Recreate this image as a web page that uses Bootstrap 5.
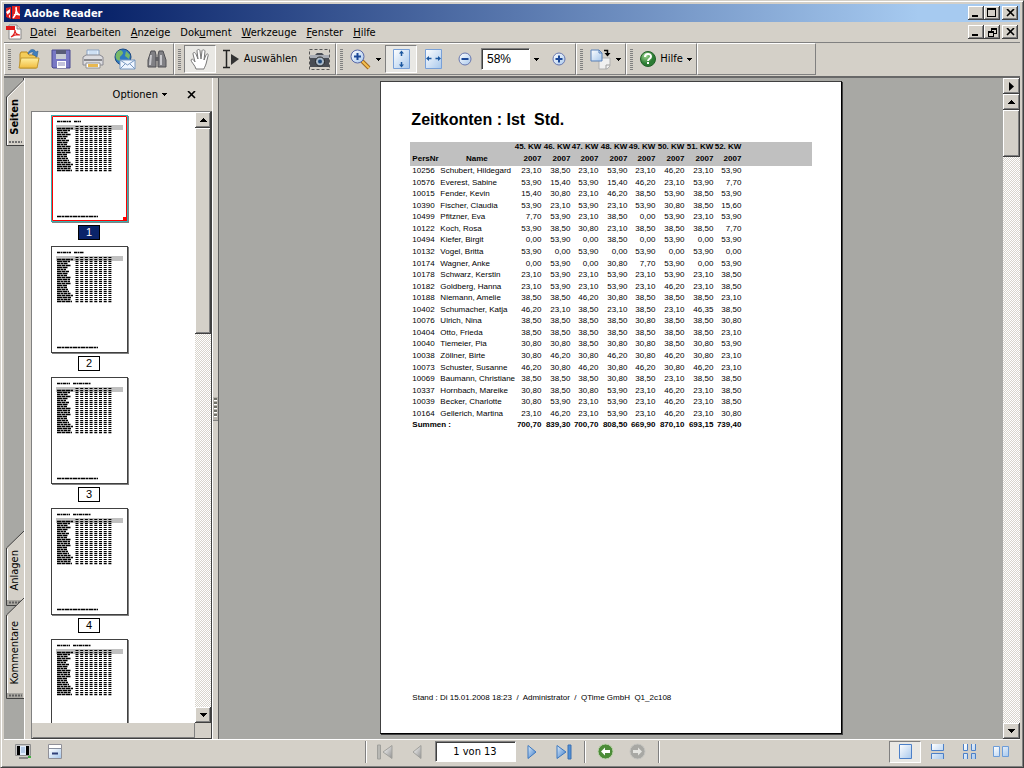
<!DOCTYPE html>
<html lang="de">
<head>
<meta charset="utf-8">
<meta name="viewport" content="width=device-width, initial-scale=1">
<title>Adobe Reader</title>
<link href="https://cdn.jsdelivr.net/npm/bootstrap@5.3.0/dist/css/bootstrap.min.css" rel="stylesheet">
<style>
:root{--face:#d4d0c8;--shade:#808080;--dark:#404040;--desk:#a8a8a4}
body{background:var(--face);color:#000;font:11px/14px "DejaVu Sans Condensed","Liberation Sans",sans-serif}
button{font:inherit;color:inherit;padding:0;border:0;background:none}
svg{display:block;flex:none}
.win{border:1px solid;border-color:#d4d0c8 #404040 #404040 #d4d0c8;box-shadow:inset 1px 1px #fff,inset -1px -1px #808080;padding:3px 3px 2px}
.titlebar{height:18px;background:linear-gradient(90deg,#0a246a 10%,#a6caf0 90%);color:#fff;font-weight:bold;padding:0 2px}
.raised{background:var(--face);box-shadow:inset -1px -1px #404040,inset 1px 1px #fff,inset -2px -2px #808080;display:flex;align-items:center;justify-content:center}
.cap{width:16px;height:14px}
.ttl,.menubar a{padding-top:2px}
.menubar{height:20px;padding:0 2px;border-bottom:1px solid var(--shade);box-sizing:content-box}
.menubar a{color:#000;text-decoration:none;margin-left:10px}
.menubar a:first-of-type{margin-left:7px}
.tools{height:33px}
.tgroup{border:1px solid;border-color:#fff #808080 #808080 #fff;height:32px}
.grip{width:3px;height:21px;margin:0 3px;background:repeating-linear-gradient(#808080 0 1px,transparent 1px 2px)}
.tgroup:first-child .grip{margin-right:2px}
.tb{width:32px;height:28px;display:flex;align-items:center;justify-content:center}
.pressed{background:#e9e8e4;border:1px solid;border-color:#808080 #fff #fff #808080}
.sel{width:87px;gap:4px}.wide{width:39px;gap:5px}.help{width:60px;gap:4px}.slim{width:13px}
.sunk{border:1px solid;border-color:#808080 #fff #fff #808080;box-shadow:inset 1px 1px #404040;background:#fff;font:inherit;color:#000;padding:0 5px;border-radius:0;height:22px}
.zoomval{width:49px;font-family:"Liberation Sans",sans-serif;font-size:12px}
.main{border-top:2px solid #686868;min-height:0}
.tabs{width:20px;background:var(--desk);padding-bottom:40px}
.sidetab{width:18px;margin-left:2px;position:relative;display:flex;align-items:center;justify-content:center}
.sidetab svg{position:absolute;inset:0}
.sidetab span{writing-mode:vertical-rl;transform:rotate(180deg);position:relative;white-space:nowrap}
.t1{height:68px;font-weight:bold;padding-top:10px}.t2{height:75px;padding-top:3px}.t3{height:101px;margin-top:-8px}
.panel{width:188px;border-left:1px solid #fff}
.panelhead{height:33px;padding:0 16px 0 0;gap:20px}
.list{margin-left:6px;border:1px solid;border-color:#808080 #404040 #404040 #808080;min-height:0}
.thumbs{background:#fff;overflow:hidden;padding:3px 0 0 19px}
.thumb{width:77px;height:107px;border:1px solid #404040;background:#fff;box-shadow:1px 1px #808080}
.thumb.on{border-color:#38b0b0}
.num{width:22px;height:15px;border:1px solid #000;margin:3px 0 6px 27px;text-align:center;line-height:13px;font-family:"Liberation Sans",sans-serif;background:#fff}
.num.on{background:#0a246a;color:#fff}
.hbar{height:15px;border-right:1px solid #808080;border-bottom:1px solid #808080;margin-left:1px}
.sbar{width:16px;background:repeating-conic-gradient(#fff 0 25%,#d8d4cc 0 50%) 0 0/2px 2px}
.sbar .raised{width:100%;height:16px}
.split{width:7px;border-left:1px solid #fff;border-right:1px solid #606060}
.knob{width:5px;height:24px;border-bottom:1px solid #808080;background:repeating-linear-gradient(#707068 0 2px,#fff 2px 3px,#b8b4ac 3px 4px) center/3px 20px no-repeat #b8b4ac}
.desk{background:var(--desk);min-width:0;padding:3px 0 5px}
.sheet{height:100%;aspect-ratio:462/654;background:#fff;border:1px solid #000;border-top-color:#404040;border-left-color:#404040;box-shadow:1px 1px #404040;font-family:"Liberation Sans",Arial,sans-serif;padding:28px 28px 29px 29px}
.sheet h1{font-size:16px;line-height:20px;font-weight:bold;margin:0 0 12px 1px;white-space:pre}
.hours{width:402px;height:290px;table-layout:fixed;border-collapse:collapse;font-size:8px;line-height:10px}
.hours td,.hours th{padding:0;text-align:right;white-space:nowrap;vertical-align:top}
.hours thead{background:#c0c0c0}.hours thead tr{height:12px}
.hours .l{text-align:left;padding-left:2px}.hours .n{text-align:left}.hours .c{text-align:center}
.foot{font-size:8px;line-height:12px;white-space:pre;padding-left:2px}
.status{height:26px;border-top:1px solid #fff;padding-bottom:2px}
.sep{width:2px;height:22px;border-left:1px solid #808080;border-right:1px solid #fff}
.pageno{width:81px;text-align:center;height:21px}
.pager{padding:0 2px}
.st{width:32px;height:22px;display:flex;align-items:center;justify-content:center}
</style>
</head>
<body>
<svg width="0" height="0" class="position-absolute" aria-hidden="true">
<defs>
<linearGradient id="bl" x2="1" y2="1"><stop stop-color="#fff"/><stop offset="1" stop-color="#a8c8ec"/></linearGradient>
<linearGradient id="bd" x2="1" y2="1"><stop stop-color="#e0eefa"/><stop offset="1" stop-color="#3878c8"/></linearGradient>
<linearGradient id="gy" x2="1" y2="1"><stop stop-color="#fff"/><stop offset="1" stop-color="#909090"/></linearGradient>
<linearGradient id="ye" x2="0" y2="1"><stop stop-color="#fff0a0"/><stop offset="1" stop-color="#f0bc40"/></linearGradient>
<radialGradient id="gr" cx=".35" cy=".3"><stop stop-color="#a0d890"/><stop offset="1" stop-color="#2c7c34"/></radialGradient>
<symbol id="dn" viewBox="0 0 5 3"><path d="M0 0h5v1H0zM1 1h3v1H1zM2 2h1v1H2z"/></symbol>
<symbol id="up7" viewBox="0 0 7 4"><path d="M3 0h1v1h1v1h1v1h1v1H0V3h1V2h1V1h1z"/></symbol>
<symbol id="dn7" viewBox="0 0 7 4"><path d="M0 0h7v1H6v1H5v1H4v1H3V3H2V2H1V1H0z"/></symbol>
</defs>
</svg>
<div class="win vh-100 d-flex flex-column">
  <header class="titlebar d-flex align-items-center">
    <svg width="14" height="14" viewBox="0 0 14 14"><path d="M0 2l5-1v12l-5-2zM6 0h8v13H6z" fill="#e02020"/><path d="M0 6l4-3v9L2 9z" fill="#fff"/><path d="M7 12c3-3 4-6 3-11M10 2c0 4 1 6 4 7M8 9c2-1 4-1 5 0" fill="none" stroke="#fff" stroke-width="1.500"/><path d="M1 11l3-4" stroke="#e02020" stroke-width="1.500"/></svg>
    <span class="ttl flex-fill ps-1">Adobe Reader</span>
    <button class="cap raised" aria-label="Minimieren"><svg width="10" height="10"><path d="M1 7h6v2H1z"/></svg></button>
    <button class="cap raised" aria-label="Maximieren"><svg width="10" height="10"><path d="M0 0h9v9H0zM1 2v6h7V2z" fill-rule="evenodd"/></svg></button>
    <button class="cap raised" style="margin-left:2px" aria-label="Schließen"><svg width="9" height="8"><path d="M1 0l7 7M8 0L1 7" stroke="#000" stroke-width="1.6"/></svg></button>
  </header>
  <nav class="menubar d-flex align-items-center">
    <svg width="17" height="16" viewBox="0 0 17 16"><path d="M3 1h8l4 4v10H3z" fill="#fff" stroke="#888"/><path d="M11 1v4h4" fill="#ddd" stroke="#888"/><path d="M0 2h9v4H0z" fill="#e01818"/><path d="M5 13c3-2 4-5 4-7 0 4 3 5 5 5-3-1-6 0-9 2z" fill="none" stroke="#e02020" stroke-width="1.2"/></svg>
    <a href="#"><u>D</u>atei</a><a href="#"><u>B</u>earbeiten</a><a href="#"><u>A</u>nzeige</a><a href="#">Dok<u>u</u>ment</a><a href="#"><u>W</u>erkzeuge</a><a href="#"><u>F</u>enster</a><a href="#"><u>H</u>ilfe</a>
    <span class="flex-fill"></span>
    <button class="cap raised" aria-label="Dokument minimieren"><svg width="10" height="10"><path d="M1 7h6v2H1z"/></svg></button>
    <button class="cap raised" aria-label="Wiederherstellen"><svg width="9" height="9"><path d="M3 0h6v6H6V5h2V2H4v1H3zM0 3h6v6H0zM1 5v3h4V5z" fill-rule="evenodd"/></svg></button>
    <button class="cap raised" style="margin-left:2px" aria-label="Dokument schließen"><svg width="9" height="8"><path d="M1 0l7 7M8 0L1 7" stroke="#000" stroke-width="1.6"/></svg></button>
  </nav>
  <div class="tools d-flex">
    <div class="tgroup d-flex align-items-center"><i class="grip"></i>
      <button class="tb" aria-label="Öffnen"><svg width="22" height="22" viewBox="0 0 22 22"><path d="M2 20V6l1-2h6l2 3h7v13z" fill="#f4cc58" stroke="#b88820"/><path d="M1 20l2-10h18l-2 10z" fill="url(#ye)" stroke="#c09830"/><path d="M10 6c1-5 6-6 8-2l2-1-1 6-5-3 2-1c-2-2-3-1-6 1z" fill="#4080c0" stroke="#306090" stroke-width=".6"/></svg></button>
      <button class="tb" aria-label="Speichern"><svg width="20" height="20" viewBox="0 0 20 20"><path d="M1 1h18v18H2l-1-1z" fill="#7878c4" stroke="#484890"/><path d="M5 1h10v9H5z" fill="#c8ccd4"/><path d="M5 1h10v4H5z" fill="#585c78"/><path d="M6 12h9v7H6z" fill="#fff"/><path d="M7 14h7M7 16h7" stroke="#8888b8"/></svg></button>
      <button class="tb" aria-label="Drucken"><svg width="22" height="22" viewBox="0 0 22 22"><path d="M5 9V2h12v7z" fill="#e4f0fc" stroke="#88a0c0"/><path d="M7 4h8M7 6h8" stroke="#b8d0ec"/><path d="M1 9l3-2h14l3 2v8H1z" fill="#dcdce0" stroke="#888890"/><path d="M2 12h18" stroke="#88888c" stroke-width="2"/><path d="M4 15h14v5H4z" fill="#fff" stroke="#909090"/><path d="M6 16h10v3H6z" fill="#e8b850"/></svg></button>
      <button class="tb" aria-label="E-Mail"><svg width="22" height="22" viewBox="0 0 22 22"><circle cx="9" cy="9" r="8" fill="#2c78c0" stroke="#1c4880"/><path d="M4 3c3-2 5 0 5 2s-4 3-3 6-3 2-4-1 0-5 2-7zM12 3l4 4-1 4-4-3z" fill="#78b868"/><path d="M6 12h15v9H6z" fill="#f0f6ff" stroke="#7898c0"/><path d="M6 12l7.500 5 7.500-5M6 21l5-5M21 21l-5-5" fill="none" stroke="#7898c0"/></svg></button>
      <button class="tb" aria-label="Suchen"><svg width="20" height="20" viewBox="0 0 20 20"><path d="M4 2h4l1 4v12H1v-7zM12 2h4l3 9v7h-8V6z" fill="#808084" stroke="#505054"/><path d="M8 8h4v4H8z" fill="#606064"/><path d="M4 6l-1 10M14 6v10" stroke="#c8c8cc" stroke-width="2"/></svg></button>
    </div>
    <div class="tgroup d-flex align-items-center"><i class="grip"></i>
      <button class="tb pressed" aria-label="Hand"><svg width="20" height="21" viewBox="0 0 20 21"><path d="M6 20c-1-4-5-7-5-9 1-2 3 0 4 2L3 5c0-2 2-2 3 0l2 5L7 2c0-2 3-2 3 0l1 8 1-8c0-2 3-1 3 0l-1 9 2-5c1-2 3-1 2 1l-2 8c-1 3-2 4-2 5z" fill="#fff" stroke="#787878"/></svg></button>
      <button class="tb sel"><svg width="18" height="20" viewBox="0 0 18 20"><path d="M1 1.500h3.500v17H1M4.500 1.500H8M4.500 18.500H8" fill="none" stroke="#222" stroke-width="1.500"/><path d="M9 5l8 5-8 6z" fill="#333"/></svg><span>Auswählen</span></button>
      <button class="tb" aria-label="Schnappschuss"><svg width="21" height="21" viewBox="0 0 21 21"><path d="M.5.500h20v20H.500z" fill="none" stroke="#555" stroke-dasharray="3 2"/><path d="M1 6h5l2-2h5l2 2h5v12H1z" fill="#484c54"/><path d="M1 6h19v3H1z" fill="#a8acb4"/><circle cx="11" cy="12.500" r="4.500" fill="#a8b8c8" stroke="#222"/><circle cx="11" cy="12.500" r="2" fill="#204878"/></svg></button>
    </div>
    <div class="tgroup d-flex align-items-center"><i class="grip"></i>
      <button class="tb wide" aria-label="Vergrößern"><svg width="21" height="21" viewBox="0 0 21 21"><path d="M12 12l7 7" stroke="#a06820" stroke-width="4"/><path d="M12 12l7 7" stroke="#f4c050" stroke-width="2"/><circle cx="7.500" cy="7.500" r="6.500" fill="url(#bl)" stroke="#5868a8"/><path d="M7.500 4v7M4 7.500h7" stroke="#1c4898" stroke-width="2"/></svg><svg width="5" height="3"><use href="#dn"/></svg></button>
      <button class="tb pressed" aria-label="Ganze Seite"><svg width="17" height="20" viewBox="0 0 17 20"><path d="M.5.500h16v19H.500z" fill="url(#bl)" stroke="#78a0d8"/><path d="M8.500 3v4M8.500 17v-4" stroke="#1c58a0" stroke-width="1.500"/><path d="M6 4.500l2.500-3 2.500 3zM6 15.500l2.500 3 2.500-3z" fill="#1c58a0"/></svg></button>
      <button class="tb" aria-label="Seitenbreite"><svg width="17" height="20" viewBox="0 0 17 20"><path d="M.5.500h16v19H.500z" fill="url(#bl)" stroke="#78a0d8"/><path d="M3 9.500h3.500M14 9.500h-3.500" stroke="#1c58a0" stroke-width="1.500"/><path d="M4 7L1 9.500 4 12zM13 7l3 2.500-3 2.500z" fill="#1c58a0"/></svg></button>
      <button class="tb" aria-label="Verkleinern"><svg width="14" height="14" viewBox="0 0 14 14"><circle cx="7" cy="7" r="6" fill="url(#bl)" stroke="#6878b0"/><path d="M3.500 7h7" stroke="#1c4898" stroke-width="2"/></svg></button>
      <input class="sunk zoomval" type="text" value="58%" aria-label="Zoomfaktor">
      <button class="tb slim" aria-label="Zoomliste"><svg width="5" height="3"><use href="#dn"/></svg></button>
      <button class="tb" aria-label="Einzoomen"><svg width="14" height="14" viewBox="0 0 14 14"><circle cx="7" cy="7" r="6" fill="url(#bl)" stroke="#6878b0"/><path d="M3.500 7h7M7 3.500v7" stroke="#1c4898" stroke-width="2"/></svg></button>
    </div>
    <div class="tgroup d-flex align-items-center"><i class="grip"></i>
      <button class="tb wide" aria-label="Drehen"><svg width="21" height="21" viewBox="0 0 21 21"><path d="M9 9h11v8l-3 3H9z" fill="#f0f0f0" stroke="#b0b0b0"/><path d="M16 20v-4h4" fill="none" stroke="#a0a0a0"/><path d="M1 1h8l3 3v8H1z" fill="url(#bl)" stroke="#5880b8"/><path d="M9 1v3h3" fill="none" stroke="#5880b8"/><path d="M14 1.500h3.500V4" fill="none" stroke="#000" stroke-width="1.500"/><path d="M14.500 4h6l-3 3.500z"/></svg><svg width="5" height="3"><use href="#dn"/></svg></button>
    </div>
    <div class="tgroup d-flex align-items-center"><i class="grip"></i>
      <button class="tb help"><svg width="16" height="16" viewBox="0 0 16 16"><circle cx="8" cy="8" r="7.500" fill="url(#gr)" stroke="#206028"/><path d="M5 6c0-4 6-4 6-.5C11 8 8 7.500 8 10" fill="none" stroke="#fff" stroke-width="2"/><path d="M7 11h2v2H7z" fill="#fff"/></svg><span>Hilfe</span><svg width="5" height="3"><use href="#dn"/></svg></button>
    </div>
    <div class="tgroup" style="width:119px"></div>
  </div>
  <div class="main d-flex flex-fill">
    <div class="tabs d-flex flex-column">
      <button class="sidetab t1"><svg width="18" height="68"><path d="M18 0L1.500 18v49H18z" fill="#d4d0c8"/><path d="M17.500 0v3L1.500 19.500V67" fill="none" stroke="#fff"/><path d="M17.500 0v2L.5 19v48.500H18" fill="none" stroke="#404040"/><path d="M3 64h13" stroke="#707070" stroke-width="2" stroke-dasharray="2 1"/></svg><span>Seiten</span></button>
      <div class="flex-fill"></div>
      <button class="sidetab t2"><svg width="18" height="75"><path d="M18 0L.5 17v57.500H18" fill="#d4d0c8" stroke="#404040"/><path d="M1.500 18v56" stroke="#fff"/><path d="M1 69h16v5H1z" fill="#aaa8a2"/><path d="M3 71.500h13" stroke="#606060" stroke-width="2" stroke-dasharray="2 1"/></svg><span>Anlagen</span></button>
      <button class="sidetab t3"><svg width="18" height="101"><path d="M18 0L.5 17v83.500H18" fill="#d4d0c8" stroke="#404040"/><path d="M1.500 18v82" stroke="#fff"/><path d="M1 95h16v5H1z" fill="#aaa8a2"/><path d="M3 97.500h13" stroke="#606060" stroke-width="2" stroke-dasharray="2 1"/></svg><span class="pb-2">Kommentare</span></button>
    </div>
    <aside class="panel d-flex flex-column">
      <div class="panelhead d-flex align-items-center justify-content-end">
        <button class="d-flex align-items-center">Optionen<svg class="ms-1" width="5" height="3"><use href="#dn"/></svg></button>
        <button aria-label="Schließen"><svg width="9" height="8"><path d="M1 0l7 7M8 0L1 7" stroke="#000" stroke-width="1.6"/></svg></button>
      </div>
      <div class="list d-flex flex-fill">
        <div class="d-flex flex-column flex-fill">
          <div class="thumbs flex-fill" id="thumbs" style="min-height:0;height:0"></div>
          <div class="hbar"></div>
        </div>
        <div class="d-flex flex-column">
          <div class="sbar d-flex flex-column flex-fill">
            <button class="raised" aria-label="Nach oben"><svg width="7" height="4"><use href="#up7"/></svg></button>
            <div class="raised" style="height:206px"></div>
            <button class="raised mt-auto" aria-label="Nach unten"><svg width="7" height="4"><use href="#dn7"/></svg></button>
          </div>
          <div style="height:15px"></div>
        </div>
      </div>
    </aside>
    <div class="split d-flex align-items-center"><div class="knob"></div></div>
    <main class="desk flex-fill d-flex justify-content-center">
      <article class="sheet d-flex flex-column">
        <h1>Zeitkonten : Ist  Std.</h1>
        <table class="hours">
          <colgroup><col style="width:30px"><col style="width:73px"><col style="width:28px"><col style="width:29px"><col style="width:28px"><col style="width:29px"><col style="width:28px"><col style="width:29px"><col style="width:29px"><col style="width:28px"><col></colgroup>
          <thead id="head"></thead><tbody id="rows"></tbody>
        </table>
        <div class="foot mt-auto">Stand : Di 15.01.2008 18:23  /  Administrator  /  QTime GmbH  Q1_2c108</div>
      </article>
    </main>
    <div class="sbar d-flex flex-column" style="width:17px">
      <button class="raised" aria-label="Mehr"><svg width="5" height="9"><path d="M0 0l5 4.500L0 9z"/></svg></button>
      <button class="raised" aria-label="Zeile nach oben"><svg width="7" height="4"><use href="#up7"/></svg></button>
      <div class="raised" style="height:47px"></div>
      <button class="raised mt-auto" aria-label="Zeile nach unten"><svg width="7" height="4"><use href="#dn7"/></svg></button>
    </div>
  </div>
  <footer class="status d-flex align-items-center">
    <div class="d-flex" style="flex:1;padding-left:3px">
      <button class="st" aria-label="Vollbild"><svg width="17" height="16" viewBox="0 0 17 16"><path d="M.5.500h15v11H.500z" fill="#c8c8c8" stroke="#909090"/><path d="M2 2h12v9H2z"/><path d="M5 2h6v9H5z" fill="#e0ecfc"/><path d="M6 4h4M6 6h4M6 8h4" stroke="#88a8d0"/><path d="M4 13h9v2H4z" fill="#888"/><path d="M13 12h3v2h-3z" fill="#40b040"/></svg></button>
      <button class="st" aria-label="Symbolleisten ausblenden"><svg width="14" height="15" viewBox="0 0 14 15"><path d="M.5.500h13v14H.500z" fill="#fff" stroke="#909098"/><path d="M1 5h12v9H1z" fill="url(#bl)"/><path d="M1 4.500h12" stroke="#8890a0"/><path d="M4 8.500h6v2H4z" fill="#304078"/></svg></button>
    </div>
    <div class="d-flex align-items-center"><i class="sep"></i>
      <div class="pager d-flex">
      <button class="st" aria-label="Erste Seite"><svg width="16" height="16" viewBox="0 0 16 16"><path d="M.5 1h3v14h-3z" fill="#b8b8b4" stroke="#a0a09c"/><path d="M15 1.500v13L6 8z" fill="url(#gy)" stroke="#a0a09c"/></svg></button>
      <button class="st" aria-label="Vorherige Seite"><svg width="10" height="16" viewBox="0 0 10 16"><path d="M9 1.500v13L1 8z" fill="url(#gy)" stroke="#a0a09c"/></svg></button>
      </div>
      <input class="sunk pageno" type="text" value="1 von 13" aria-label="Seite">
      <button class="st" aria-label="Nächste Seite"><svg width="10" height="16" viewBox="0 0 10 16"><path d="M1 1.500v13L9 8z" fill="url(#bd)" stroke="#3c78c0"/></svg></button>
      <button class="st" aria-label="Letzte Seite"><svg width="16" height="16" viewBox="0 0 16 16"><path d="M1 1.500v13L10 8z" fill="url(#bd)" stroke="#3c78c0"/><path d="M12 1h3v14h-3z" fill="#5090d8" stroke="#3c70b0"/></svg></button>
      <i class="sep ms-1"></i>
      <button class="st ms-1" aria-label="Zurück"><svg width="17" height="17" viewBox="0 0 17 17"><circle cx="8.500" cy="8.500" r="7.500" fill="#4c8c38" stroke="#c0d4b0"/><path d="M4 8.500l4-4v2.500h5v3H8v2.500z" fill="#fff"/></svg></button>
      <button class="st" aria-label="Vor"><svg width="17" height="17" viewBox="0 0 17 17"><circle cx="8.500" cy="8.500" r="7.500" fill="#a8a8a4" stroke="#c4c4c0"/><path d="M13 8.500l-4-4v2.500H4v3h5v2.500z" fill="#e4e4e0"/></svg></button>
      <i class="sep ms-1"></i>
    </div>
    <div class="d-flex justify-content-end" style="flex:1;padding-right:3px">
      <button class="st pressed" aria-label="Einzelne Seite"><svg width="13" height="15"><path d="M.5.500h12v14H.500z" fill="url(#bl)" stroke="#4c80c8"/></svg></button>
      <button class="st" aria-label="Fortlaufend"><svg width="13" height="15"><path d="M.5 0v6.500h12V0M.5 15V9.500h12V15" fill="url(#bl)" stroke="#4c80c8"/></svg></button>
      <button class="st" aria-label="Fortlaufend – Doppelseiten"><svg width="13" height="15"><path d="M.5 0v6.500h4V0M8.500 0v6.500h4V0M.5 15V9.500h4V15M8.500 15V9.500h4V15" fill="url(#bl)" stroke="#4c80c8"/></svg></button>
      <button class="st" aria-label="Doppelseiten"><svg width="16" height="11"><path d="M.5.500h6v10h-6zM9.500.500h6v10h-6z" fill="url(#bl)" stroke="#6c9cd8"/></svg></button>
    </div>
  </footer>
</div>
<script>
const data=`10256|Schubert, Hildegard|23,10 38,50 23,10 53,90 23,10 46,20 23,10 53,90
10576|Everest, Sabine|53,90 15,40 53,90 15,40 46,20 23,10 53,90 7,70
10015|Fender, Kevin|15,40 30,80 23,10 46,20 38,50 53,90 38,50 53,90
10390|Fischer, Claudia|53,90 23,10 53,90 23,10 53,90 30,80 38,50 15,60
10499|Pfitzner, Eva|7,70 53,90 23,10 38,50 0,00 53,90 23,10 53,90
10122|Koch, Rosa|53,90 38,50 30,80 23,10 38,50 38,50 38,50 7,70
10494|Kiefer, Birgit|0,00 53,90 0,00 38,50 0,00 53,90 0,00 53,90
10132|Vogel, Britta|53,90 0,00 53,90 0,00 53,90 0,00 53,90 0,00
10174|Wagner, Anke|0,00 53,90 0,00 30,80 7,70 53,90 0,00 53,90
10178|Schwarz, Kerstin|23,10 53,90 23,10 53,90 23,10 53,90 23,10 38,50
10182|Goldberg, Hanna|23,10 53,90 23,10 53,90 23,10 46,20 23,10 38,50
10188|Niemann, Amelie|38,50 38,50 46,20 30,80 38,50 38,50 38,50 23,10
10402|Schumacher, Katja|46,20 23,10 38,50 23,10 38,50 23,10 46,35 38,50
10076|Ulrich, Nina|38,50 38,50 38,50 38,50 30,80 38,50 38,50 30,80
10404|Otto, Frieda|38,50 38,50 38,50 38,50 38,50 38,50 38,50 23,10
10040|Tiemeier, Pia|30,80 30,80 38,50 30,80 30,80 38,50 30,80 53,90
10038|Zöllner, Birte|30,80 46,20 30,80 46,20 30,80 46,20 30,80 23,10
10073|Schuster, Susanne|46,20 30,80 46,20 30,80 46,20 30,80 46,20 23,10
10069|Baumann, Christiane|38,50 38,50 38,50 30,80 38,50 23,10 38,50 38,50
10337|Hornbach, Mareike|30,80 38,50 30,80 53,90 23,10 46,20 23,10 38,50
10039|Becker, Charlotte|30,80 53,90 23,10 53,90 23,10 46,20 23,10 38,50
10164|Gellerich, Martina|23,10 46,20 23,10 53,90 23,10 46,20 23,10 30,80`.split('\n').map(r=>r.split('|'));
const weeks=[45,46,47,48,49,50,51,52];
head.innerHTML='<tr><th colspan="2"></th>'+weeks.map(w=>`<th>${w}. KW</th>`).join('')+'<th></th></tr><tr><th class="l">PersNr</th><th class="c">Name</th>'+weeks.map(()=>'<th>2007</th>').join('')+'<th></th></tr>';
rows.innerHTML=data.map(([id,name,v])=>`<tr><td class="l">${id}</td><td class="n">${name}</td>${v.split(' ').map(x=>`<td>${x}</td>`).join('')}</tr>`).join('')
 +'<tr><th class="l" colspan="2">Summen :</th>'+'700,70 839,30 700,70 808,50 669,90 870,10 693,15 739,40'.split(' ').map(x=>`<th>${x}</th>`).join('')+'</tr>';

// page miniatures: every line of the report becomes a row of small dashes
function mini(i){
  let s='<path d="M5 5.500h'+(i>1?13:14)+'m3 0h'+(i>1?18:i?10:7)+'" stroke="#000" stroke-width="1.600" stroke-dasharray="3 .5 2 .5"/><path d="M4 9h67v5H4z" fill="#c0c0c0"/>';
  for(let r=0;r<23;r++){
    const y=10+r*2, n=r?data[r-1][1].length*.85:12;
    if(r)s+=`<path d="M5 ${y}.500h${Math.round(n)}" stroke="#000" stroke-width="1.300" stroke-dasharray="${3+r%3} .5"/>`;
    else s+='<path d="M5 12.500h4m5 0h4" stroke="#000"/>';
    s+=`<path d="M23.500 ${y}.500h37" stroke="#000" stroke-width="${r%5==2?1.6:1.2}" stroke-dasharray="3 1.700"/>`;
  }
  s+='<path d="M5 100.500h41" stroke="#000" stroke-width="1.300" stroke-dasharray="4 .5 3 .5"/>';
  if(!i)s+='<path d="M.5.500h74v104H.500z" fill="none" stroke="#f00"/><path d="M71 101h4v4h-4z" fill="#f00"/>';
  return `<svg width="75" height="105" viewBox="0 0 75 105">${s}</svg>`;
}
thumbs.innerHTML=[0,1,2,3,4].map(i=>`<div class="thumb ${i?'':'on'}">${mini(i)}</div>`+(i<4?`<div class="num ${i?'':'on'}">${i+1}</div>`:'')).join('');
</script>
<script src="https://cdn.jsdelivr.net/npm/bootstrap@5.3.0/dist/js/bootstrap.bundle.min.js"></script>
</body>
</html>
